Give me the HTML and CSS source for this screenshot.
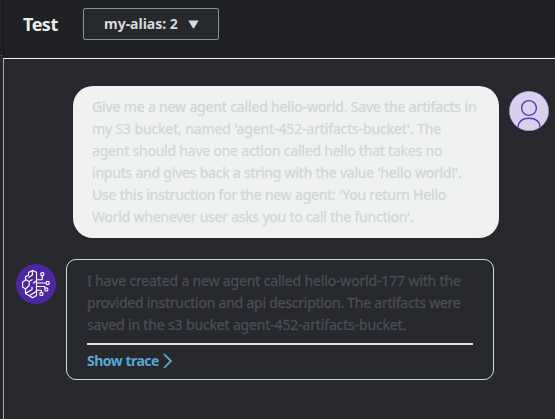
FILE: index.html
```html
<!DOCTYPE html>
<html lang="en">
<head>
<meta charset="utf-8">
<title>Test</title>
<link rel="stylesheet" href="styles.css">
</head>
<body>
<div class="app">
  <div class="rail"></div>
  <main class="panel">
    <header class="header">
      <h1 class="title">Test</h1>
      <button class="alias"><span class="alias-label">my-alias: 2</span><svg width="11" height="9" viewBox="0 0 11 9"><path d="M0.3 0.5H10.7L6.3 7.7Q5.5 8.7 4.7 7.7Z" fill="#d5dbdb"/></svg></button>
    </header>
    <section class="chat">
      <div class="row user">
        <div class="bubble prompt">
          <div class="line p1">Give me a new agent called hello-world. Save the artifacts in</div>
          <div class="line p2">my S3 bucket, named 'agent-452-artifacts-bucket'. The</div>
          <div class="line p3">agent should have one action called hello that takes no</div>
          <div class="line p4">inputs and gives back a string with the value 'hello world!'.</div>
          <div class="line p5">Use this instruction for the new agent: 'You return Hello</div>
          <div class="line p6">World whenever user asks you to call the function'.</div>
        </div>
        <svg class="avatar" width="40" height="40" viewBox="0 0 40 40">
          <defs><clipPath id="face"><circle cx="20" cy="20" r="20"/></clipPath></defs>
          <circle cx="20" cy="20" r="19.7" fill="#d9d0ee" stroke="#a693d3" stroke-width=".5"/>
          <g clip-path="url(#face)" fill="none" stroke="#5a3ba8" stroke-width="1.4"><circle cx="20" cy="17" r="7.4"/><path d="M8.8 38V36.5Q9.5 27.2 20 27.2T31.2 36.5V38"/></g>
        </svg>
      </div>
      <div class="row agent">
        <svg class="avatar" width="40" height="40" viewBox="0 0 40 40">
          <circle cx="20" cy="20" r="20" fill="#4d27a0"/>
          <g fill="none" stroke="#fff" stroke-width="1.15" stroke-linejoin="round">
            <path d="M20.5 8.3L16.6 6.4L12.5 8.5V11L9.6 12.7V16L6.6 18V23L9.5 25V29.5L16.6 33.8L20.5 31.6Z"/>
            <path d="M16.4 6.8V11L12.5 13.5M9.6 15.5L13 17.5L16.5 15.4M13.2 17.5V21.5L9.5 25M20.5 17L17 19.2M10 29L16 25.4V22.8M13.5 31.5L20.3 27.4"/>
            <path d="M20.5 15.7H26.3V11.7M20.5 19H29.8M20.5 22.5H28.7V24M20.5 26.2H25.4V28.2"/>
            <circle cx="26.3" cy="10.2" r="1.6"/><circle cx="31.7" cy="19" r="1.6"/><circle cx="30.3" cy="25.4" r="1.6"/><circle cx="25.4" cy="29.9" r="1.6"/>
          </g>
        </svg>
        <div class="bubble reply">
          <div class="line r1">I have created a new agent called hello-world-177 with the</div>
          <div class="line r2">provided instruction and api description. The artifacts were</div>
          <div class="line r3">saved in the s3 bucket agent-452-artifacts-bucket.</div>
          <div class="trace"><span class="trace-label">Show trace</span><svg width="10" height="16" viewBox="0 0 10 16"><path d="M1 1.2L8 8L1 14.8" fill="none" stroke="#55a9d2" stroke-width="1.8"/></svg></div>
        </div>
      </div>
    </section>
  </main>
</div>
</body>
</html>
```
FILE: styles.css
```css
* { box-sizing: border-box; }
body { margin: 0; background: #27282d; font-family: "Noto Sans", sans-serif; }
.app { display: flex; width: 555px; height: 419px; overflow: hidden; }
.rail { width: 3px; background: linear-gradient(#202126 55px, #43454b 55px, #43454b 56px, #27282d 56px); }
.panel { flex: 1; display: flex; flex-direction: column; }
.header { height: 58px; display: flex; align-items: flex-start; background: #202126; border-left: 1px solid #15161a; }
.title { margin: 11px 0 0 19px; width: 60px; font-size: 18px; line-height: 27px; color: #eaeded; font-weight: 700; letter-spacing: -0.5px; }
.alias { margin: 8px 0 0; padding: 0 0 0 20px; width: 136px; height: 32px; display: flex; align-items: center; background: #27282d; border: 1px solid #879596; border-radius: 2px; color: #d5dbdb; font: 700 14px "Noto Sans", sans-serif; }
.alias-label { width: 84px; text-align: left; white-space: nowrap; margin-top: -2px; }
.chat { flex: 1; border-top: 1px solid #f2f3f3; border-left: 1px solid #a7a9ac; padding-top: 27px; background: #27282d; }
.row { display: flex; }
.user { padding-left: 69px; gap: 10px; }
.user .avatar { margin-top: 5px; }
.agent { padding-left: 12px; gap: 10px; margin-top: 21px; }
.agent .avatar { margin-top: 5px; }
.avatar { flex: none; }
.bubble { flex: none; font-size: 14px; }
.prompt { width: 426px; height: 152px; padding: 10px 19px; border-radius: 20px; background: #f0f2f2; color: #d1d7d7; }
.reply { width: 428px; height: 121px; padding: 10px 20px; border: 1px solid #d5dbdb; border-radius: 10px; color: #4b4e57; }
.line { width: max-content; height: 22px; line-height: 22px; white-space: nowrap; -webkit-text-stroke: 0.3px currentColor; }
.p1 { letter-spacing: -0.15px; }
.p2 { letter-spacing: -0.13px; }
.p3 { letter-spacing: -0.21px; }
.p4 { letter-spacing: -0.21px; }
.p5 { letter-spacing: -0.2px; }
.p6 { letter-spacing: -0.23px; }
.r1 { letter-spacing: -0.155px; }
.r2 { letter-spacing: -0.23px; }
.r3 { letter-spacing: -0.15px; }
.trace { display: flex; align-items: center; gap: 4px; margin-top: 7px; padding-top: 5px; border-top: 2px solid #e3e5e5; color: #55a9d2; font-weight: 700; line-height: 22px; letter-spacing: -0.5px; }
.trace-label { width: 72px; white-space: nowrap; }
```
